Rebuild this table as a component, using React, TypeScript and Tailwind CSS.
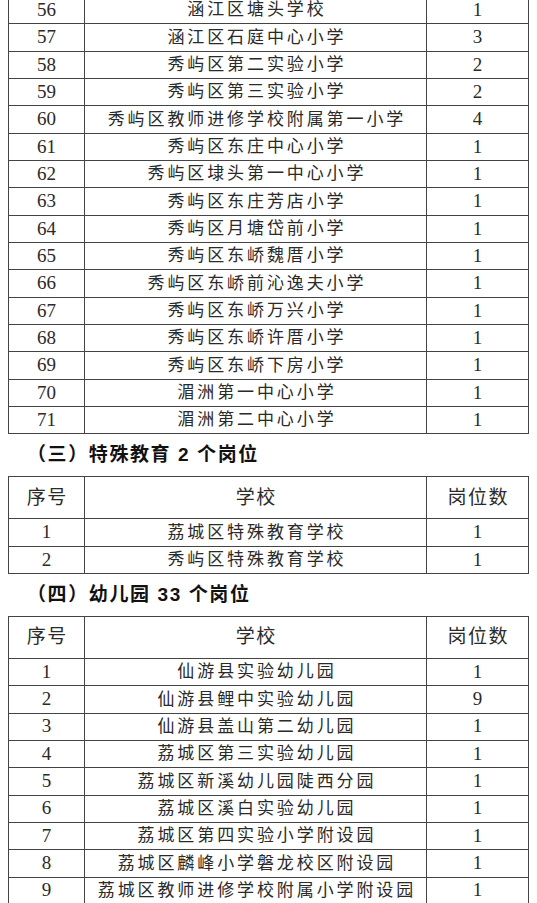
const font = "font-['Liberation_Serif','Noto_Sans_CJK_SC',serif]";

type Row = [string, string, string];

const primary: Row[] = [
  ["56", "涵江区塘头学校", "1"],
  ["57", "涵江区石庭中心小学", "3"],
  ["58", "秀屿区第二实验小学", "2"],
  ["59", "秀屿区第三实验小学", "2"],
  ["60", "秀屿区教师进修学校附属第一小学", "4"],
  ["61", "秀屿区东庄中心小学", "1"],
  ["62", "秀屿区埭头第一中心小学", "1"],
  ["63", "秀屿区东庄芳店小学", "1"],
  ["64", "秀屿区月塘岱前小学", "1"],
  ["65", "秀屿区东峤魏厝小学", "1"],
  ["66", "秀屿区东峤前沁逸夫小学", "1"],
  ["67", "秀屿区东峤万兴小学", "1"],
  ["68", "秀屿区东峤许厝小学", "1"],
  ["69", "秀屿区东峤下房小学", "1"],
  ["70", "湄洲第一中心小学", "1"],
  ["71", "湄洲第二中心小学", "1"],
];

const special: Row[] = [
  ["1", "荔城区特殊教育学校", "1"],
  ["2", "秀屿区特殊教育学校", "1"],
];

const kinder: Row[] = [
  ["1", "仙游县实验幼儿园", "1"],
  ["2", "仙游县鲤中实验幼儿园", "9"],
  ["3", "仙游县盖山第二幼儿园", "1"],
  ["4", "荔城区第三实验幼儿园", "1"],
  ["5", "荔城区新溪幼儿园陡西分园", "1"],
  ["6", "荔城区溪白实验幼儿园", "1"],
  ["7", "荔城区第四实验小学附设园", "1"],
  ["8", "荔城区麟峰小学磐龙校区附设园", "1"],
  ["9", "荔城区教师进修学校附属小学附设园", "1"],
];

const TableRow = ({ row, header = false }: { row: Row; header?: boolean }) => (
  <div className={`flex border-b border-[#444] ${header ? "h-[42px] text-[19px]" : "h-[27.33px] text-[17px]"}`}>
    <div className="w-[76px] border-r border-[#444] flex items-center justify-center">
      <span className={header ? "tracking-[1.5px] pl-[1.5px]" : "text-[19px]"}>{row[0]}</span>
    </div>
    <div className="w-[342px] border-r border-[#444] flex items-center justify-center">
      <span className={header ? "tracking-[1.5px] pl-[1.5px]" : "tracking-[2.9px] pl-[2.9px]"}>{row[1]}</span>
    </div>
    <div className="flex-1 flex items-center justify-center">
      <span className={header ? "tracking-[1.5px] pl-[1.5px]" : "text-[19px]"}>{row[2]}</span>
    </div>
  </div>
);

const Table = ({ rows, withHeader = true, className = "" }: { rows: Row[]; withHeader?: boolean; className?: string }) => (
  <div className={`ml-[8px] w-[521px] border-l border-r border-t border-[#444] ${className}`}>
    {withHeader && <TableRow row={["序号", "学校", "岗位数"]} header />}
    {rows.map((r) => (
      <TableRow key={r[0] + r[1]} row={r} />
    ))}
  </div>
);

const Heading = ({ children }: { children: React.ReactNode }) => (
  <div className="h-[42px] flex items-center pl-[27px] text-[19px] font-bold text-[#111] tracking-[1.6px] font-['Liberation_Sans','Noto_Sans_CJK_SC',sans-serif] [text-spacing-trim:space-all] whitespace-pre">
    {children}
  </div>
);

export default function App() {
  return (
    <div className={`w-[537px] h-[903px] overflow-hidden bg-white text-[#2a2a2a] ${font}`}>
      <Table rows={primary} withHeader={false} className="-mt-[4px]" />
      <Heading>（三）特殊教育 2 个岗位</Heading>
      <Table rows={special} />
      <Heading>（四）幼儿园 33 个岗位</Heading>
      <Table rows={kinder} />
    </div>
  );
}
